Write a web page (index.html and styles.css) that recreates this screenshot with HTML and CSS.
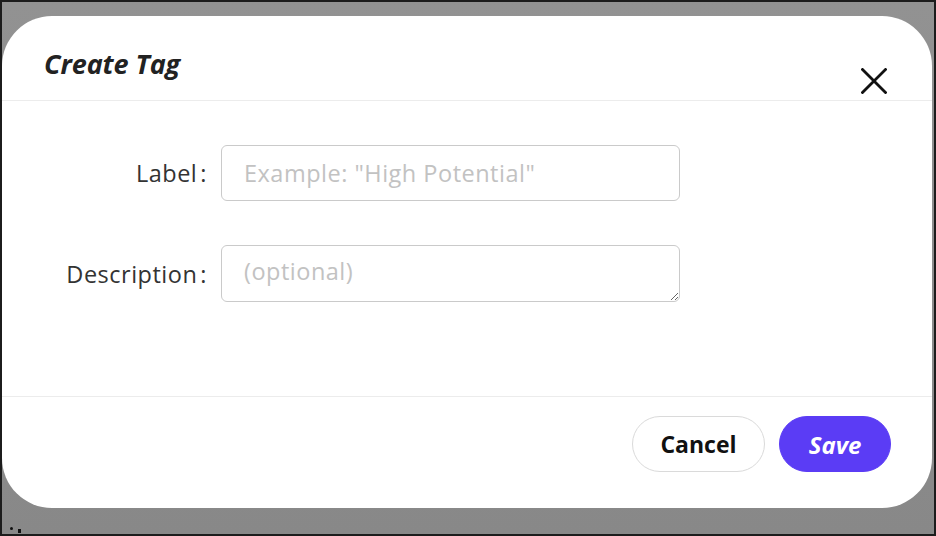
FILE: index.html
```html
<!DOCTYPE html>
<html>
<head>
<meta charset="utf-8">
<link rel="stylesheet" href="styles.css">
</head>
<body>
<div class="frame">
  <div class="dialog">
    <div class="header">
      <h1 class="title">Create Tag</h1>
      <button class="close" aria-label="Close">
        <svg width="26" height="26" viewBox="0 0 26 26"><path d="M1.5 1.5 L24.5 24.5 M24.5 1.5 L1.5 24.5" stroke="#111" stroke-width="2.8" stroke-linecap="square" fill="none"/></svg>
      </button>
    </div>
    <div class="body">
      <div class="row">
        <label class="label">Label<span class="colon">:</span></label>
        <input class="field" type="text" placeholder="Example: &quot;High Potential&quot;">
      </div>
      <div class="row">
        <label class="label">Description<span class="colon">:</span></label>
        <textarea class="field area" placeholder="(optional)"></textarea>
      </div>
    </div>
    <div class="footer">
      <button class="btn cancel">Cancel</button>
      <button class="btn save">Save</button>
    </div>
  </div>
  <div class="peek"><span class="dot"></span><span class="dot tall"></span></div>
</div>
</body>
</html>
```
FILE: styles.css
```css
* { box-sizing: border-box; }
html, body { margin: 0; padding: 0; }
body { font-family: "Open Sans", "Liberation Sans", sans-serif; }
.frame {
  width: 936px;
  height: 536px;
  border: 2px solid #1c1c1c;
  background: linear-gradient(#929292, #888888);
  padding-top: 14px;
  overflow: hidden;
  position: relative;
}
.dialog {
  width: 930px;
  height: 492px;
  background: #fff;
  border-radius: 50px;
  display: flex;
  flex-direction: column;
}
.header {
  height: 85px;
  border-bottom: 1px solid #ececec;
  display: flex;
  justify-content: space-between;
  align-items: flex-start;
  padding: 0 45px 0 42px;
}
.title {
  margin: 30px 0 0;
  font-size: 27px;
  line-height: 36px;
  font-weight: 700;
  font-style: italic;
  color: #222;
  letter-spacing: -0.1px;
}
.close {
  margin-top: 52px;
  width: 26px;
  height: 26px;
  padding: 0;
  border: 0;
  background: none;
  display: flex;
}
.body {
  height: 296px;
  border-bottom: 1px solid #ececec;
  padding-top: 44px;
  display: flex;
  flex-direction: column;
  gap: 44px;
}
.row {
  display: grid;
  grid-template-columns: 219px 459px;
  align-items: center;
}
.label {
  text-align: right;
  padding-right: 14px;
  font-size: 23.5px;
  color: #333;
  letter-spacing: 0.5px;
}
.colon { margin-left: 3px; }
.field {
  height: 56px;
  width: 459px;
  border: 1px solid #cacaca;
  border-radius: 6px;
  padding: 0 22px;
  font-family: inherit;
  font-size: 23.5px;
  letter-spacing: 0.5px;
  color: #333;
  outline: none;
}
.area { resize: vertical; padding-top: 9px; display: block; height: 57px; }
.field::placeholder { color: #c2c2c2; }
.footer {
  flex: 1;
  display: flex;
  justify-content: flex-end;
  align-items: flex-start;
  gap: 14px;
  padding: 19px 41px 0 0;
}
.btn {
  height: 56px;
  border-radius: 28px;
  font-family: inherit;
  font-size: 23px;
  font-weight: 700;
  padding: 0;
}
.cancel {
  width: 133px;
  background: #fff;
  border: 1px solid #dadada;
  color: #111;
}
.save {
  width: 112px;
  background: #5b3cf5;
  border: 1px solid #5b3cf5;
  color: #fff;
  font-style: italic;
  font-size: 24px;
}
.peek {
  position: absolute;
  left: 8px;
  bottom: 1px;
  display: flex;
  gap: 5px;
  align-items: flex-end;
}
.dot { width: 3px; height: 3px; background: #111; border-radius: 50%; margin-bottom: 3px; }
.dot.tall { height: 4px; border-radius: 0; margin-bottom: 0; }
```
